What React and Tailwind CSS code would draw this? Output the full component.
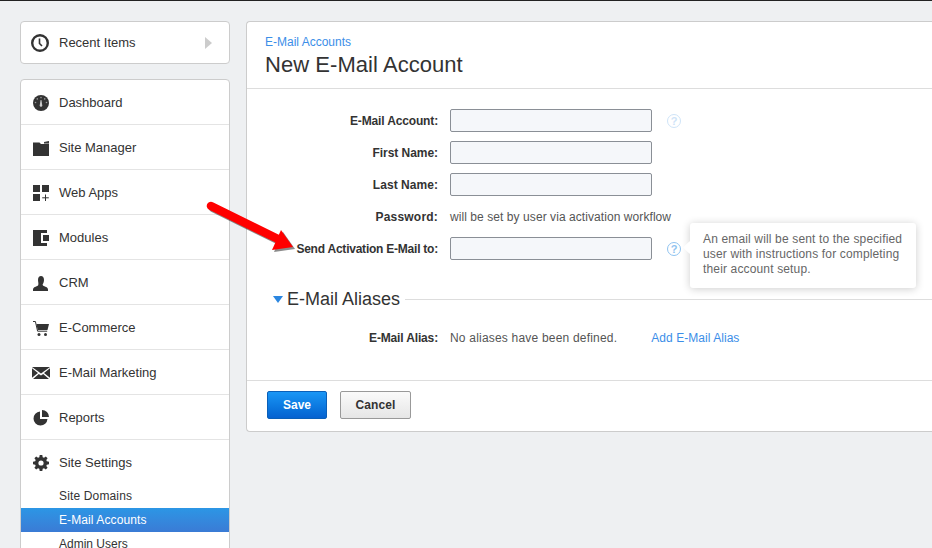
function DashIcon() {
  return (
    <svg width="16" height="16" viewBox="0 0 16 16">
      <circle cx="8" cy="8" r="8" fill="#333" />
      <g fill="#999">
        <circle cx="8" cy="2.600" r="0.800" />
        <circle cx="4.300" cy="3.900" r="0.800" />
        <circle cx="11.700" cy="3.900" r="0.800" />
        <circle cx="2.500" cy="7.500" r="0.800" />
        <circle cx="13.500" cy="7.500" r="0.800" />
      </g>
      <path d="M7.600 5h.8l.9 5.500a1.300 1.300 0 0 1-2.600 0z" fill="#ccc" />
    </svg>
  );
}

function FolderIcon() {
  return (
    <svg width="16" height="15" viewBox="0 0 16 15">
      <path d="M0 1.500h6.500l1.500 1.500h3V1l5-1v15H0z" fill="#333" />
      <path d="M11 2.400h5" stroke="#fff" strokeWidth="0.500" />
    </svg>
  );
}

function AppsIcon() {
  return (
    <svg width="16" height="16" viewBox="0 0 16 16">
      <rect x="0" y="0" width="7" height="7" fill="#333" />
      <rect x="9" y="0" width="7" height="7" fill="#333" />
      <rect x="0" y="9" width="7" height="7" fill="#333" />
      <path d="M12.500 9.500v6.500M9.200 12.800h6.600" stroke="#333" strokeWidth="1" />
    </svg>
  );
}

function ModulesIcon() {
  return (
    <svg width="16" height="16" viewBox="0 0 16 16">
      <path d="M0 0h14v3H8v10h6v3H0z" fill="#333" />
      <rect x="10" y="5" width="6" height="6" fill="#333" />
    </svg>
  );
}

function UserIcon() {
  return (
    <svg width="16" height="15" viewBox="0 0 16 15">
      <path d="M5 4c0-2.500 1.200-4 3-4s3 1.500 3 4c0 1.800-.7 3.300-1.300 4.200-.2.800.2 1.300 1.200 1.800 2 .9 4.100 1.600 4.100 3.500V15H0v-1.500C0 11.600 2.100 10.900 4.100 10c1-.5 1.400-1 1.200-1.800C5.700 7.300 5 5.800 5 4z" fill="#333" />
    </svg>
  );
}

function CartIcon() {
  return (
    <svg width="16" height="15" viewBox="0 0 16 15">
      <path d="M0 .500h2.400l2.200 9.700h9.600" fill="none" stroke="#333" strokeWidth="1" />
      <path d="M3.400 3H16l-1.500 6H4.700z" fill="#333" />
      <circle cx="6" cy="13.500" r="1.500" fill="#333" />
      <circle cx="12.500" cy="13.500" r="1.500" fill="#333" />
    </svg>
  );
}

function MailIcon() {
  return (
    <svg width="18" height="12" viewBox="0 0 18 12">
      <path d="M0 0h18L9 6.500z" fill="#333" />
      <path d="M0 1.200v9.600L6 6zM18 1.200v9.600L12 6z" fill="#333" />
      <path d="M1 12l5.800-5L9 8.500 11.200 7 17 12z" fill="#333" />
    </svg>
  );
}

function PieIcon() {
  return (
    <svg width="16" height="16" viewBox="0 0 16 16">
      <path d="M7 1.500a7 7 0 1 0 7.500 7.500H7z" fill="#333" />
      <path d="M9 0a7 7 0 0 1 7 7H9z" fill="#333" />
    </svg>
  );
}

function GearIcon() {
  return (
    <svg width="16" height="16" viewBox="0 0 16 16">
      <path d="M6.700 0h2.600l.4 2.200 1.300.5L12.800 1.400l1.800 1.800-1.300 1.800.5 1.300 2.200.4v2.600l-2.200.4-.5 1.300 1.300 1.800-1.800 1.800-1.800-1.300-1.300.5-.4 2.200H6.700l-.4-2.200-1.300-.5-1.800 1.300-1.800-1.800 1.300-1.800-.5-1.300L0 9.300V6.700l2.200-.4.5-1.300-1.300-1.800 1.800-1.800L5 2.700l1.300-.5z" fill="#333" />
      <circle cx="8" cy="8" r="2.600" fill="#fff" />
    </svg>
  );
}

function HelpIcon({ faded }) {
  return (
    <span className={`mt-[2px] flex h-[14px] w-[14px] items-center justify-center rounded-full border-[1.5px] text-[11px] font-bold leading-none ${faded ? "border-[#cfe4f8] text-[#cfe4f8]" : "border-[#8fc3f0] text-[#8fc3f0]"}`}>
      ?
    </span>
  );
}

const navItems = [
  { label: "Dashboard", icon: <DashIcon /> },
  { label: "Site Manager", icon: <FolderIcon /> },
  { label: "Web Apps", icon: <AppsIcon /> },
  { label: "Modules", icon: <ModulesIcon /> },
  { label: "CRM", icon: <UserIcon /> },
  { label: "E-Commerce", icon: <CartIcon /> },
  { label: "E-Mail Marketing", icon: <MailIcon /> },
  { label: "Reports", icon: <PieIcon /> },
];

function FormRow({ label, track, children }) {
  return (
    <div className="flex h-[32px] items-center">
      <label className={`w-[191px] pt-[2px] text-right text-xs font-bold text-[#333] ${track}`}>{label}</label>
      <div className="ml-[12px] flex items-center">{children}</div>
    </div>
  );
}

function TextBox() {
  return <input type="text" className="h-[23px] w-[202px] rounded-[2px] border border-[#8a8f96] bg-[#f5f7fa]" />;
}

export default function App() {
  return (
    <div className="relative h-[548px] w-[932px] overflow-hidden border-t border-[#222] bg-[#eef0f2] font-['Liberation_Sans',Arial,sans-serif]">
      <div className="flex items-start gap-[16px] pl-[20px] pt-[20px]">
        <aside className="w-[210px] shrink-0">
          <div className="flex h-[43px] items-center rounded-[4px] border border-[#ccc] bg-white pl-[10px] pr-[17px] pt-[1px] text-[13px] text-[#333]">
            <svg width="18" height="18" viewBox="0 0 18 18" className="shrink-0">
              <circle cx="9" cy="9" r="7.800" fill="none" stroke="#333" strokeWidth="2.400" />
              <path d="M8.500 4.500v5l2.500 2.500" fill="none" stroke="#333" strokeWidth="1.600" />
            </svg>
            <span className="ml-[10px] flex-1">Recent Items</span>
            <span className="h-0 w-0 border-y-[6px] border-l-[7px] border-y-transparent border-l-[#ccc]" />
          </div>

          <nav className="mt-[15px] rounded-t-[4px] border border-[#ccc] bg-white">
            {navItems.map((item) => (
              <div key={item.label} className="flex h-[45px] items-center border-b border-[#e4e4e4] pt-[2px] text-[13px] text-[#333]">
                <span className="flex w-[38px] shrink-0 justify-center pl-[2px]">{item.icon}</span>
                <span>{item.label}</span>
              </div>
            ))}
            <div className="flex h-[44px] items-center pt-[2px] text-[13px] text-[#333]">
              <span className="flex w-[38px] shrink-0 justify-center pl-[2px]"><GearIcon /></span>
              <span>Site Settings</span>
            </div>
            <div className="flex h-[24px] items-center pl-[38px] text-xs tracking-[0.15px] text-[#333]">Site Domains</div>
            <div className="flex h-[24px] items-center bg-gradient-to-b from-[#2b96e5] to-[#3a7bd5] pl-[38px] text-xs tracking-[0.1px] text-white">E-Mail Accounts</div>
            <div className="flex h-[24px] items-center pl-[38px] text-xs text-[#333]">Admin Users</div>
          </nav>
        </aside>

        <main className="w-[700px] shrink-0 rounded-l-[4px] border border-r-0 border-[#ccc] bg-white">
          <header className="h-[67px] border-b border-[#ddd] pl-[18px] pt-[13px]">
            <div className="text-xs leading-[14px] text-[#3b8ee8]">E-Mail Accounts</div>
            <h1 className="mt-[2px] text-[22px] leading-[28px] tracking-[0.05px] text-[#333]">New E-Mail Account</h1>
          </header>

          <div className="pt-[15px]">
            <FormRow label="E-Mail Account:" track="tracking-[-0.15px]">
              <TextBox />
              <span className="ml-[15px]"><HelpIcon faded /></span>
            </FormRow>
            <FormRow label="First Name:" track="tracking-[-0.05px]"><TextBox /></FormRow>
            <FormRow label="Last Name:" track="tracking-[0.05px]"><TextBox /></FormRow>
            <FormRow label="Password:" track="tracking-[0.2px]">
              <span className="pt-[2px] text-xs tracking-[0.07px] text-[#555]">will be set by user via activation workflow</span>
            </FormRow>
            <FormRow label="Send Activation E-Mail to:" track="tracking-[-0.23px]">
              <TextBox />
              <span className="ml-[15px]"><HelpIcon /></span>
            </FormRow>
          </div>

          <div className="mt-[23px] flex items-center pl-[26px]">
            <span className="h-0 w-0 border-x-[5px] border-t-[7px] border-x-transparent border-t-[#2b86e0]" />
            <h2 className="ml-[4px] text-lg leading-[24px] text-[#333]">E-Mail Aliases</h2>
            <span className="ml-[5px] h-px flex-1 bg-[#ddd]" />
          </div>

          <div className="mt-[15px] flex h-[24px] items-center">
            <span className="w-[191px] text-right text-xs font-bold tracking-[-0.15px] text-[#333]">E-Mail Alias:</span>
            <span className="ml-[12px] text-xs tracking-[0.2px] text-[#555]">No aliases have been defined.</span>
            <a className="ml-[34px] text-xs tracking-[0.05px] text-[#3b8ee8]">Add E-Mail Alias</a>
          </div>

          <footer className="mt-[30px] flex h-[51px] items-center gap-[13px] border-t border-[#ddd] pb-[2px] pl-[20px]">
            <button className="h-[28px] w-[60px] rounded-[2px] border border-[#0a5fb8] bg-gradient-to-b from-[#1a96f5] to-[#0662d0] text-xs font-bold text-white">Save</button>
            <button className="h-[28px] w-[71px] rounded-[2px] border border-[#999] bg-gradient-to-b from-[#fafafa] to-[#e6e6e6] text-xs font-bold tracking-[0.1px] text-[#333]">Cancel</button>
          </footer>
        </main>
      </div>

      <div className="absolute left-[690px] top-[222px] h-[65px] w-[226px] rounded-[3px] bg-white pl-[13px] pt-[9px] text-xs leading-[15px] tracking-[0.15px] text-[#666] shadow-[0_1px_8px_rgba(0,0,0,0.2)]">
        <span className="absolute left-[-5px] top-[20px] h-[9px] w-[9px] rotate-45 bg-white" />
        <p className="relative">An email will be sent to the specified user with instructions for completing their account setup.</p>
      </div>

      <svg className="absolute left-[200px] top-[194px]" width="100" height="60" viewBox="0 0 100 60">
        <g transform="translate(2 2)" opacity="0.45">
          <path d="M11 11L78 44" stroke="#000" strokeWidth="8.500" strokeLinecap="round" />
          <path d="M93 52L72 55L81 35z" fill="#000" />
        </g>
        <path d="M11 11L78 44" stroke="#f00" strokeWidth="8.500" strokeLinecap="round" />
        <path d="M93 52L72 55L81 35z" fill="#f00" />
      </svg>
    </div>
  );
}
